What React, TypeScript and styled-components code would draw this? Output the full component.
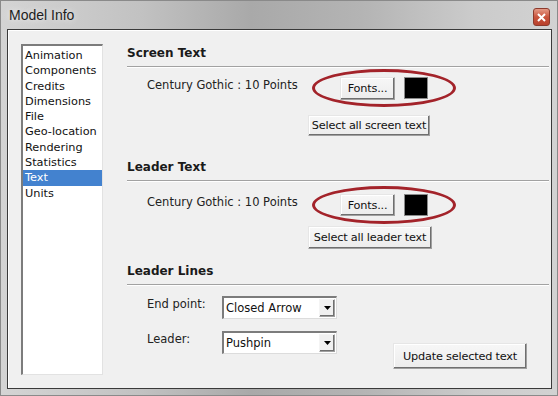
import styled, { createGlobalStyle } from "styled-components";

const GlobalStyle = createGlobalStyle`
  html, body {
    margin: 0;
    padding: 0;
    overflow: hidden;
  }
  body {
    font-family: "DejaVu Sans", Verdana, sans-serif;
  }
`;

const items = [
  "Animation",
  "Components",
  "Credits",
  "Dimensions",
  "File",
  "Geo-location",
  "Rendering",
  "Statistics",
  "Text",
  "Units",
];

const App = () => {
  return (
    <>
      <GlobalStyle />
      <Window>
        <TitleBar>
          <Title>Model Info</Title>
          <CloseButton>
            <svg width="9" height="9" viewBox="0 0 9 9">
              <path d="M1 1 L8 8 M8 1 L1 8" stroke="#fff" strokeWidth="2" />
            </svg>
          </CloseButton>
        </TitleBar>
        <Client>
          <ListBox>
            {items.map((item) => (
              <ListItem key={item} $selected={item === "Text"}>
                {item}
              </ListItem>
            ))}
          </ListBox>
          <Panel>
            <Heading $top={1}>Screen Text</Heading>
            <FontRow $top={10}>
              <InfoText>Century Gothic : 10 Points</InfoText>
              <FontGroup>
                <Ring />
                <Button $h={23} $w={55}>Fonts...</Button>
                <Swatch />
              </FontGroup>
            </FontRow>
            <ActionRow $top={15}>
              <Button $h={21} $w={122}>Select all screen text</Button>
            </ActionRow>

            <Heading $top={23}>Leader Text</Heading>
            <FontRow $top={13}>
              <InfoText>Century Gothic : 10 Points</InfoText>
              <FontGroup>
                <Ring />
                <Button $h={22} $w={55}>Fonts...</Button>
                <Swatch />
              </FontGroup>
            </FontRow>
            <ActionRow $top={10}>
              <Button $h={23} $w={124}>Select all leader text</Button>
            </ActionRow>

            <Heading $top={14}>Leader Lines</Heading>
            <LinesBody>
              <Fields>
                <FieldRow>
                  <FieldLabel>End point:</FieldLabel>
                  <Combo>
                    <ComboValue>Closed Arrow</ComboValue>
                    <ComboArrow>
                      <svg width="7" height="4" viewBox="0 0 7 4">
                        <path d="M0 0 H7 L3.5 4 Z" fill="#000" />
                      </svg>
                    </ComboArrow>
                  </Combo>
                </FieldRow>
                <FieldRow>
                  <FieldLabel>Leader:</FieldLabel>
                  <Combo>
                    <ComboValue>Pushpin</ComboValue>
                    <ComboArrow>
                      <svg width="7" height="4" viewBox="0 0 7 4">
                        <path d="M0 0 H7 L3.5 4 Z" fill="#000" />
                      </svg>
                    </ComboArrow>
                  </Combo>
                </FieldRow>
              </Fields>
              <UpdateButton $h={26} $w={134}>
                Update selected text
              </UpdateButton>
            </LinesBody>
          </Panel>
        </Client>
      </Window>
    </>
  );
};

export default App;

const Window = styled.div`
  width: 558px;
  height: 396px;
  box-sizing: border-box;
  display: flex;
  flex-direction: column;
  background: linear-gradient(
    90deg,
    #d4d4d4 0%,
    #c2c2c2 25%,
    #a9a9a9 45%,
    #b4b4b4 65%,
    #cbcbcb 85%,
    #d2d2d2 100%
  );
  border: 1px solid #8a8a8a;
`;

const TitleBar = styled.div`
  height: 28px;
  display: flex;
  align-items: center;
  justify-content: space-between;
  padding: 0 7px 0 8px;
`;

const Title = styled.span`
  font-family: "Liberation Sans", Arial, sans-serif;
  font-size: 14px;
  color: #1e1e1e;
  text-shadow: 0 0 6px rgba(255, 255, 255, 0.8);
`;

const CloseButton = styled.div`
  width: 17px;
  height: 18px;
  box-sizing: border-box;
  border: 1px solid #8d3a2c;
  border-radius: 3px;
  background: linear-gradient(#e49a86, #c9543d 50%, #b8412c);
  display: flex;
  align-items: center;
  justify-content: center;
  margin-top: 4px;
`;

const Client = styled.div`
  flex: 1;
  margin: 0 5px 6px 6px;
  border: 1px solid #3a3a3a;
  box-shadow: inset 1px 1px 0 #ffffff;
  background: #f0f0f0;
  display: flex;
  align-items: flex-start;
  padding: 14px 2px 13px 13px;
  min-height: 0;
`;

const ListBox = styled.ul`
  margin: 0;
  padding: 2px 0;
  list-style: none;
  width: 82px;
  height: 331px;
  box-sizing: border-box;
  background: #ffffff;
  border-style: solid;
  border-width: 2px 1px 1px 2px;
  border-color: #7c7c7c #e2e2e2 #e2e2e2 #7c7c7c;
  flex-shrink: 0;
`;

const ListItem = styled.li<{ $selected?: boolean }>`
  font-size: 11.3px;
  line-height: 15.3px;
  padding-left: 2px;
  color: ${(p) => (p.$selected ? "#ffffff" : "#111111")};
  background: ${(p) => (p.$selected ? "#4382cf" : "transparent")};
`;

const Panel = styled.div`
  flex: 1;
  margin-left: 24px;
  display: flex;
  flex-direction: column;
`;

const Heading = styled.div<{ $top: number }>`
  margin-top: ${(p) => p.$top}px;
  font-size: 12px;
  font-weight: bold;
  line-height: 17px;
  color: #1a1a1a;
  padding-bottom: 4px;
  border-bottom: 1px solid #a2a2a2;
  box-shadow: 0 1px 0 #ffffff;
`;

const FontRow = styled.div<{ $top: number }>`
  margin-top: ${(p) => p.$top}px;
  padding-left: 20px;
  display: flex;
  align-items: flex-start;
`;

const InfoText = styled.span`
  width: 193px;
  font-size: 11.5px;
  line-height: 16px;
  color: #222;
`;

const FontGroup = styled.div`
  position: relative;
  display: flex;
  align-items: flex-start;
  gap: 9px;
`;

const Ring = styled.div`
  position: absolute;
  left: -28px;
  top: -8px;
  width: 144px;
  height: 38px;
  box-sizing: border-box;
  border: 3px solid #a3232a;
  border-radius: 50%;
  pointer-events: none;
`;

const Button = styled.div<{ $h: number; $w: number }>`
  height: ${(p) => p.$h}px;
  width: ${(p) => p.$w}px;
  box-sizing: border-box;
  display: flex;
  align-items: center;
  justify-content: center;
  font-size: 11.3px;
  letter-spacing: -0.2px;
  color: #111;
  white-space: nowrap;
  background: linear-gradient(#f7f7f7, #ececec);
  border: 1px solid #a0a0a0;
  border-top-color: #e6e6e6;
  border-left-color: #e6e6e6;
  box-shadow: inset -1px -1px 0 #6f6f6f, inset 1px 1px 0 #ffffff;
`;

const Swatch = styled.div`
  width: 24px;
  height: 22px;
  box-sizing: border-box;
  background: #000;
  border: 1px solid #8a8a8a;
`;

const ActionRow = styled.div<{ $top: number }>`
  margin-top: ${(p) => p.$top}px;
  padding-left: 181px;
  display: flex;
`;

const LinesBody = styled.div`
  display: flex;
  align-items: flex-start;
`;

const Fields = styled.div`
  padding-left: 20px;
  display: flex;
  flex-direction: column;
  gap: 12px;
  margin-top: 11px;
`;

const FieldRow = styled.div`
  display: flex;
  align-items: flex-start;
`;

const FieldLabel = styled.span`
  width: 75px;
  font-size: 11.5px;
  line-height: 16px;
  color: #222;
`;

const Combo = styled.div`
  width: 115px;
  height: 23px;
  box-sizing: border-box;
  background: #fff;
  border-style: solid;
  border-width: 2px 1px 1px 2px;
  border-color: #7c7c7c #dcdcdc #dcdcdc #7c7c7c;
  display: flex;
  align-items: center;
  justify-content: space-between;
`;

const ComboValue = styled.span`
  font-size: 11.5px;
  color: #111;
  padding-left: 2px;
`;

const ComboArrow = styled.div`
  width: 16px;
  height: 18px;
  box-sizing: border-box;
  margin-right: 1px;
  background: #f0f0f0;
  border: 1px solid #a0a0a0;
  border-top-color: #f4f4f4;
  border-left-color: #f4f4f4;
  box-shadow: inset -1px -1px 0 #707070;
  display: flex;
  align-items: center;
  justify-content: center;
`;

const UpdateButton = styled(Button)`
  margin-left: auto;
  margin-right: 22px;
  margin-top: 58px;
`;
